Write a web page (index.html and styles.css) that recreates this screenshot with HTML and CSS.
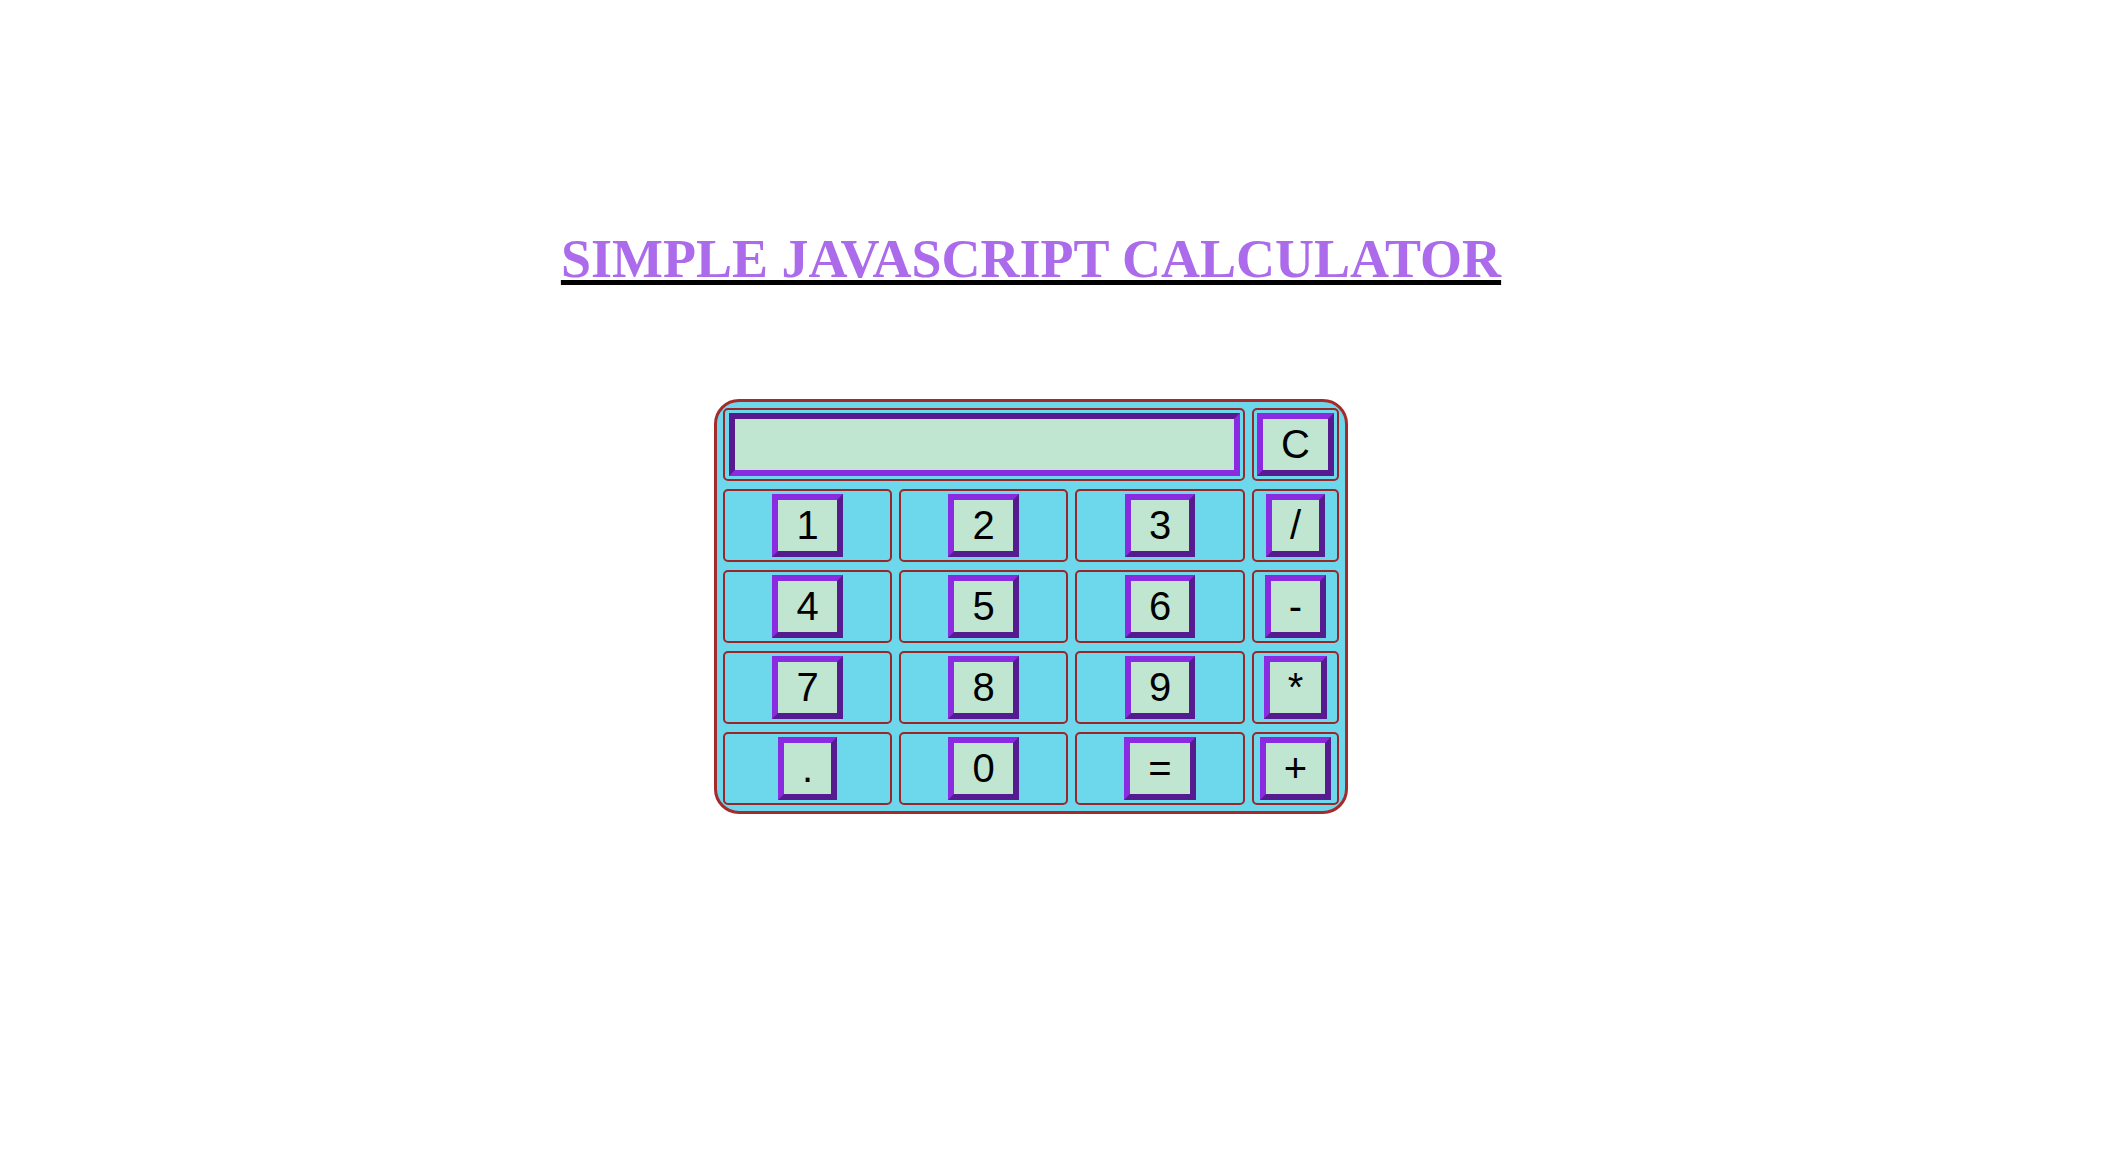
FILE: index.html
```html
<!DOCTYPE html>
<html>
<head>
<meta charset="utf-8">
<title>Simple JavaScript Calculator</title>
<link rel="stylesheet" href="styles.css">
</head>
<body>
<div class="page">
  <h1 class="title">SIMPLE JAVASCRIPT CALCULATOR</h1>
  <div class="calc">
    <div class="cell span3"><input class="display" type="text" value=""></div>
    <div class="cell"><button class="key">C</button></div>

    <div class="cell"><button class="key">1</button></div>
    <div class="cell"><button class="key">2</button></div>
    <div class="cell"><button class="key">3</button></div>
    <div class="cell"><button class="key">/</button></div>

    <div class="cell"><button class="key">4</button></div>
    <div class="cell"><button class="key">5</button></div>
    <div class="cell"><button class="key">6</button></div>
    <div class="cell"><button class="key">-</button></div>

    <div class="cell"><button class="key">7</button></div>
    <div class="cell"><button class="key">8</button></div>
    <div class="cell"><button class="key">9</button></div>
    <div class="cell"><button class="key">*</button></div>

    <div class="cell"><button class="key">.</button></div>
    <div class="cell"><button class="key">0</button></div>
    <div class="cell"><button class="key">=</button></div>
    <div class="cell"><button class="key">+</button></div>
  </div>
</div>
</body>
</html>
```

FILE: styles.css
```css
html, body {
  margin: 0;
  padding: 0;
  background: #ffffff;
}

.page {
  width: 2062px;
  display: flex;
  flex-direction: column;
  align-items: center;
  padding-top: 228px;
}

.title {
  margin: 0;
  font-family: "Liberation Serif", "Times New Roman", serif;
  font-weight: bold;
  font-size: 54px;
  line-height: 62px;
  color: #ab6bea;
  text-decoration: underline;
  text-decoration-color: #000000;
  text-decoration-thickness: 5px;
  text-underline-offset: 3px;
}

.calc {
  margin-top: 109px;
  display: grid;
  grid-template-columns: 169px 169px 170px 87px;
  grid-template-rows: repeat(5, 73px);
  column-gap: 7px;
  row-gap: 8px;
  padding: 6px;
  background: #6dd8ec;
  border: 3px solid #a52a2a;
  border-radius: 25px;
}

.cell {
  box-sizing: border-box;
  border: 2px solid #982828;
  border-radius: 5px;
  display: flex;
  align-items: center;
  justify-content: center;
}

.span3 {
  grid-column: span 3;
}

.key {
  box-sizing: border-box;
  height: 63px;
  padding: 0 18px;
  margin: 0;
  font-family: "Liberation Sans", Arial, sans-serif;
  font-size: 40px;
  line-height: 51px;
  color: #000000;
  background: #c0e6d2;
  border: 6px outset #8a2be2;
  border-radius: 0;
}

.display {
  box-sizing: border-box;
  width: 511px;
  height: 63px;
  margin: 0 0 0 1px;
  padding: 0 6px;
  font-family: "Liberation Sans", Arial, sans-serif;
  font-size: 40px;
  background: #c0e6d2;
  border: 6px inset #8a2be2;
  border-radius: 0;
  outline: none;
}
```
